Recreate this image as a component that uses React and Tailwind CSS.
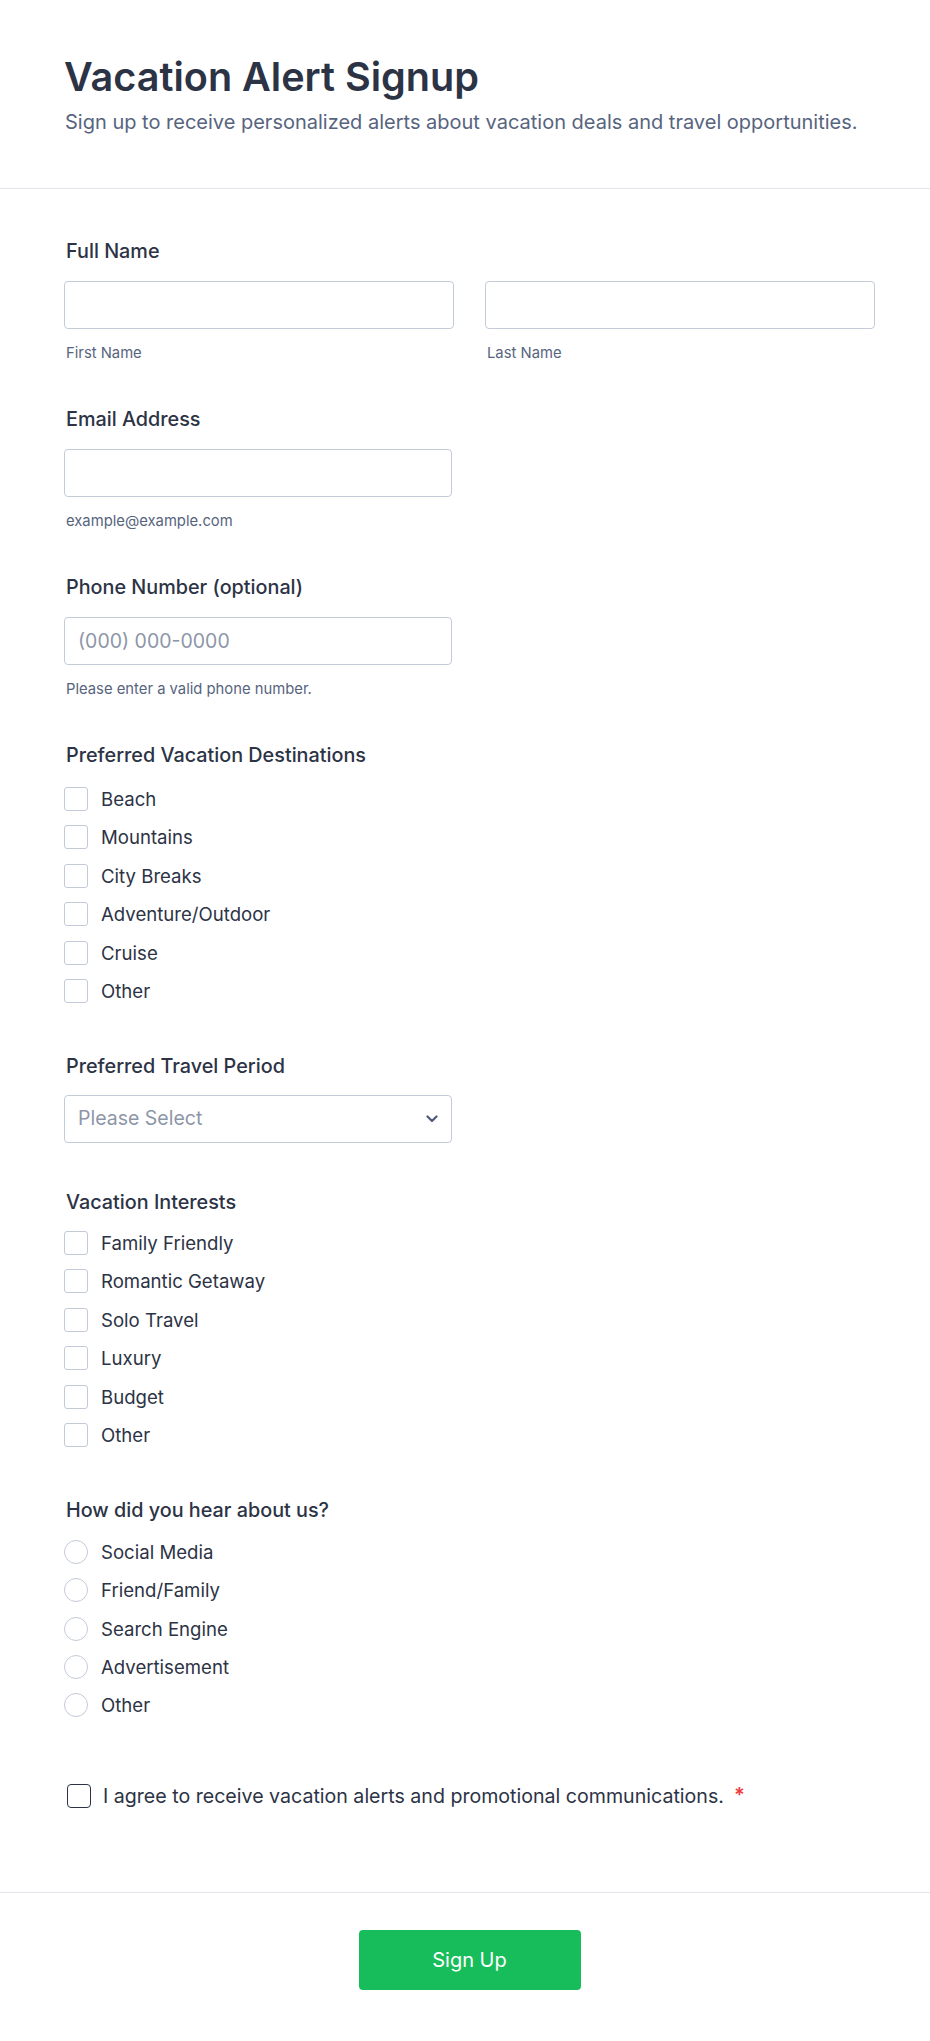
import React from "react";

const destinations = ["Beach", "Mountains", "City Breaks", "Adventure/Outdoor", "Cruise", "Other"];
const interests = ["Family Friendly", "Romantic Getaway", "Solo Travel", "Luxury", "Budget", "Other"];
const sources = ["Social Media", "Friend/Family", "Search Engine", "Advertisement", "Other"];

const Label = ({ children, className = "" }) => (
  <div className={`pl-[2px] text-[19.8px] leading-[27px] font-medium text-[#2c3345] ${className}`}>{children}</div>
);

const Sub = ({ children }) => (
  <div className="mt-[14px] pl-[2px] text-[14.8px] leading-[20px] text-[#57647e]">{children}</div>
);

const TextBox = ({ placeholder = "", className = "" }) => (
  <input
    type="text"
    placeholder={placeholder}
    className={`h-[48px] border border-[#c3cad8] rounded-[4px] bg-white px-[13px] text-[19.5px] text-[#2c3345] placeholder:text-[#8d96a8] outline-none ${className}`}
  />
);

const OptionList = ({ items, round, className = "mt-[18px]" }) => (
  <div className={`flex flex-col gap-[14.4px] ${className}`}>
    {items.map((item) => (
      <label key={item} className="flex items-center h-6">
        <input
          type={round ? "radio" : "checkbox"}
          name={round ? "source" : undefined}
          className={`appearance-none w-6 h-6 border border-[#c3cad8] bg-white shrink-0 ${round ? "rounded-full" : "rounded-[3px]"}`}
        />
        <span className="ml-[13px] text-[18.6px] leading-[24px] text-[#2c3345]">{item}</span>
      </label>
    ))}
  </div>
);

export default function App() {
  return (
    <div className="w-[930px] min-h-[2041px] bg-white" style={{ fontFamily: "Inter, 'Noto Sans', sans-serif" }}>
      {/* header */}
      <header className="border-b border-[#e3e5ea] pt-[54px] pb-[52px] pl-[64px]">
        <h1 className="text-[39.6px] leading-[46px] font-semibold text-[#2c3345]">Vacation Alert Signup</h1>
        <p className="mt-[9px] pl-px text-[20px] leading-[27px] text-[#57647e]">
          Sign up to receive personalized alerts about vacation deals and travel opportunities.
        </p>
      </header>

      <main className="pl-[64px] pt-[49px] pb-[84px]">
        <div className="w-[811px]">
          {/* full name */}
          <Label>Full Name</Label>
          <div className="mt-[16px] grid grid-cols-2 gap-x-[31px]">
            <div>
              <TextBox className="w-full" />
              <Sub>First Name</Sub>
            </div>
            <div>
              <TextBox className="w-full" />
              <Sub>Last Name</Sub>
            </div>
          </div>

          <Label className="mt-[43px]">Email Address</Label>
          <TextBox className="mt-[16px] w-[388px]" />
          <Sub>example@example.com</Sub>

          <Label className="mt-[43px]">Phone Number (optional)</Label>
          <TextBox className="mt-[16px] w-[388px]" placeholder="(000) 000-0000" />
          <Sub>Please enter a valid phone number.</Sub>

          <Label className="mt-[43px]">Preferred Vacation Destinations</Label>
          <OptionList items={destinations} />

          <Label className="mt-[50px]">Preferred Travel Period</Label>
          <div className="mt-[15px] w-[388px] h-[48px] border border-[#c3cad8] rounded-[4px] bg-white flex items-center justify-between pl-[13px] pr-[13px]">
            <span className="text-[19.5px] text-[#8d96a8]">Please Select</span>
            <svg width="12" height="8" viewBox="0 0 12 8" fill="none">
              <path d="M1.5 1.5L6 6L10.5 1.5" stroke="#4f5b78" strokeWidth="2.2" strokeLinecap="round" strokeLinejoin="round" />
            </svg>
          </div>

          <Label className="mt-[46px]">Vacation Interests</Label>
          <OptionList items={interests} className="mt-[15px]" />

          <Label className="mt-[50px]">How did you hear about us?</Label>
          <OptionList items={sources} round className="mt-[16px]" />

          <label className="mt-[67px] flex items-center h-6">
            <input
              type="checkbox"
              className="appearance-none ml-[3px] w-6 h-6 border-[1.5px] border-[#2c3345] rounded-[4px] bg-white shrink-0"
            />
            <span className="ml-[12px] text-[19.6px] leading-[24px] text-[#2c3345]">
              I agree to receive vacation alerts and promotional communications.
            </span>
            <span className="ml-[10px] self-start -mt-[1px] text-[20px] leading-[24px] font-semibold text-[#f23a3c]">*</span>
          </label>
        </div>
      </main>

      {/* footer */}
      <footer className="border-t border-[#e3e5ea] pt-[37px] pb-[50px] pl-[64px]">
        <div className="w-[811px] flex justify-center">
          <button className="w-[222px] h-[60px] rounded-[4px] bg-[#18bd5b] text-white text-[20px]">Sign Up</button>
        </div>
      </footer>
    </div>
  );
}
